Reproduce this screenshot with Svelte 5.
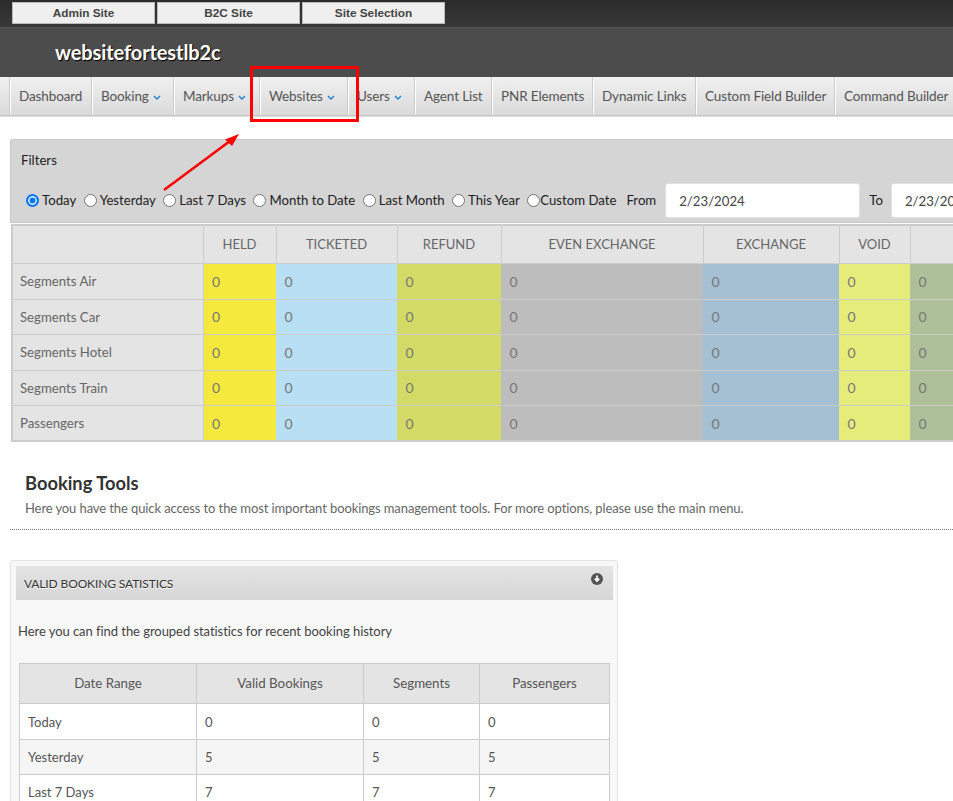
<script>
  const navItems = [
    { label: 'Dashboard', w: 82 },
    { label: 'Booking', w: 82, caret: true },
    { label: 'Markups', w: 86, caret: true },
    { label: 'Websites', w: 88, caret: true },
    { label: 'Users', w: 67, caret: true },
    { label: 'Agent List', w: 77 },
    { label: 'PNR Elements', w: 101 },
    { label: 'Dynamic Links', w: 103 },
    { label: 'Custom Field Builder', w: 139 },
    { label: 'Command Builder', w: 130 }
  ];
  const ranges = ['Today', 'Yesterday', 'Last 7 Days', 'Month to Date', 'Last Month', 'This Year', 'Custom Date'];
  const cols = [
    { label: 'HELD', w: 73, color: '#f4e93c' },
    { label: 'TICKETED', w: 121, color: '#b9dff4' },
    { label: 'REFUND', w: 104, color: '#d3da65' },
    { label: 'EVEN EXCHANGE', w: 202, color: '#bdbdbd' },
    { label: 'EXCHANGE', w: 136, color: '#a5c0d3' },
    { label: 'VOID', w: 71, color: '#e5ec7a' },
    { label: '', w: 90, color: '#adc09a' }
  ];
  const rows = ['Segments Air', 'Segments Car', 'Segments Hotel', 'Segments Train', 'Passengers'];
  const stats = [
    ['Today', 0, 0, 0],
    ['Yesterday', 5, 5, 5],
    ['Last 7 Days', 7, 7, 7]
  ];
</script>

<div class="page">
  <div class="topbar">
    <button class="site">Admin Site</button>
    <button class="site">B2C Site</button>
    <button class="site">Site Selection</button>
  </div>
  <header class="brand"><span>websitefortestlb2c</span></header>
  <nav class="nav">
    {#each navItems as item}
      <div class="nav-item" style="width:{item.w}px">
        {item.label}
        {#if item.caret}
          <svg class="caret" width="8" height="5" viewBox="0 0 8 5"><path d="M1 1l3 3 3-3" fill="none" stroke="#1f7fd0" stroke-width="1.4" /></svg>
        {/if}
      </div>
    {/each}
  </nav>

  <section class="filters">
    <div class="filters-title">Filters</div>
    <div class="filters-row">
      {#each ranges as r, i}
        <label class="radio" class:tight={i === 6}>
          <span class="dot" class:on={i === 0}></span>{r}
        </label>
      {/each}
      <span class="lbl from">From</span>
      <div class="date">2/23/2024</div>
      <span class="lbl to">To</span>
      <div class="date">2/23/2024</div>
    </div>
  </section>

  <table class="summary">
    <colgroup>
      <col style="width:191px" />
      {#each cols as c}<col style="width:{c.w}px" />{/each}
    </colgroup>
    <thead>
      <tr>
        <th></th>
        {#each cols as c}<th>{c.label}</th>{/each}
      </tr>
    </thead>
    <tbody>
      {#each rows as r}
        <tr>
          <td class="rowhead">{r}</td>
          {#each cols as c}<td style="background:{c.color}">0</td>{/each}
        </tr>
      {/each}
    </tbody>
  </table>

  <section class="tools">
    <h2>Booking Tools</h2>
    <p>Here you have the quick access to the most important bookings management tools. For more options, please use the main menu.</p>
  </section>

  <section class="panel">
    <div class="panel-head">
      <span>VALID BOOKING SATISTICS</span>
      <svg class="panel-icon" width="12" height="12" viewBox="0 0 12 12">
        <circle cx="6" cy="6" r="6" fill="#555" />
        <path d="M6 2.6v5M3.8 5.6L6 8l2.2-2.4" fill="none" stroke="#fff" stroke-width="1.7" />
      </svg>
    </div>
    <p class="panel-text">Here you can find the grouped statistics for recent booking history</p>
    <table class="stats">
      <colgroup>
        <col style="width:177px" /><col style="width:167px" /><col style="width:116px" /><col style="width:130px" />
      </colgroup>
      <thead>
        <tr><th>Date Range</th><th>Valid Bookings</th><th>Segments</th><th>Passengers</th></tr>
      </thead>
      <tbody>
        {#each stats as s}
          <tr>{#each s as v}<td>{v}</td>{/each}</tr>
        {/each}
      </tbody>
    </table>
  </section>

  <div class="highlight"></div>
  <svg class="arrow" width="90" height="70" viewBox="0 0 90 70">
    <path d="M4 60L70 11" stroke="#f00" stroke-width="2.6" fill="none" />
    <path d="M79 4L65 9.5 72 16z" fill="#f00" />
  </svg>
</div>

<style>
  :global(html), :global(body) {
    margin: 0;
    overflow: hidden;
    background: #fff;
  }
  .page {
    position: relative;
    width: 953px;
    height: 801px;
    overflow: hidden;
    font-family: Lato, "Liberation Sans", sans-serif;
    font-size: 13px;
    color: #555;
  }
  .topbar {
    height: 27px;
    box-sizing: border-box;
    padding: 2px 0 0 12px;
    display: flex;
    gap: 2px;
    background: linear-gradient(#2b2b2b, #383838);
  }
  .site {
    width: 143px;
    height: 22px;
    padding: 0;
    border: 1px solid #bbb;
    background: #efefef;
    font: bold 11.8px "Liberation Sans", sans-serif;
    color: #444;
  }
  .brand {
    height: 50px;
    box-sizing: border-box;
    padding: 0 0 2px 55px;
    display: flex;
    align-items: center;
    background: #4c4c4c;
    border-top: 1px solid #555;
    font-size: 20px;
    letter-spacing: -0.1px;
    font-weight: 700;
    color: #fff;
    text-shadow: 1px 1px 1px #000;
  }
  .nav {
    height: 39px;
    box-sizing: border-box;
    padding-left: 10px;
    display: flex;
    background: linear-gradient(#f0f0f0, #dadada);
    border-bottom: 1px solid #c4c4c4;
    box-shadow: 0 1px 1px #e2e2e2;
    white-space: nowrap;
  }
  .nav-item {
    flex: none;
    box-sizing: border-box;
    padding-left: 8px;
    display: flex;
    align-items: center;
    gap: 4px;
    border-left: 1px solid #fff;
    box-shadow: -1px 0 0 #ccc;
    font-size: 13.5px;
    letter-spacing: -0.12px;
    color: #555;
  }
  .caret {
    flex: none;
    margin-top: 2px;
  }
  .filters {
    box-sizing: border-box;
    width: 960px;
    height: 84px;
    margin: 23px 0 0 10px;
    padding: 12px 10px 0;
    background: #d5d5d5;
    border-top: 1px solid #c8c8c8;
    border-left: 1px solid #c8c8c8;
    border-bottom: 1px solid #c8c8c8;
    border-radius: 3px 0 0 0;
    font-size: 13.2px;
    color: #222;
  }
  .filters-title {
    height: 17px;
    line-height: 17px;
  }
  .filters-row {
    margin-top: 14px;
    height: 34px;
    display: flex;
    align-items: center;
    white-space: nowrap;
    margin-left: 5px;
    width: 960px;
  }
  .radio {
    display: flex;
    align-items: center;
    margin-right: 7.4px;
  }
  .radio.tight {
    margin-right: 0;
  }
  .radio.tight .dot {
    margin-right: 0;
  }
  .dot {
    box-sizing: border-box;
    width: 13px;
    height: 13px;
    margin-right: 3px;
    border: 1px solid #767676;
    border-radius: 50%;
    background: #fff;
  }
  .dot.on {
    border: 2px solid #0075ff;
    box-shadow: inset 0 0 0 1.5px #fff;
    background: #0075ff;
  }
  .lbl.from {
    margin-left: 10px;
  }
  .lbl.to {
    margin: 0 8px 0 0;
  }
  .date {
    flex: none;
    box-sizing: border-box;
    width: 195px;
    height: 35px;
    margin: 0 9px 0 9px;
    padding-left: 13px;
    line-height: 35px;
    background: #fff;
    border: 1px solid #e2e2e2;
    border-radius: 3px;
    color: #444;
  }
  .date:last-child {
    margin-left: 0;
  }
  table {
    border-collapse: collapse;
    table-layout: fixed;
  }
  .summary {
    width: 988px;
    margin: 1px 0 0 11px;
    border: 2px solid #ccc;
  }
  .summary th {
    height: 37px;
    box-sizing: content-box;
    padding: 0 0 0;
    background: #e4e4e4;
    border: 1px solid #ccc;
    font-size: 13px;
    line-height: 15px;
    vertical-align: top;
    padding-top: 11px;
    height: 26px;
    font-weight: 400;
    color: #666;
    text-align: center;
  }
  .summary td {
    height: 35.5px;
    padding: 0 0 0 8.6px;
    box-sizing: border-box;
    border: 1px solid #ccc;
    border-width: 1px 0;
    font-size: 14px;
    color: #777;
  }
  .summary td.rowhead {
    padding-left: 7px;
    background: #e4e4e4;
    border-right: 1px solid #ccc;
    color: #666;
    font-size: 13.2px;
  }
  .tools {
    height: 88px;
    box-sizing: border-box;
    margin: 0 0 0 10px;
    padding: 27px 0 0 15px;
    border-bottom: 1px dotted #777;
  }
  .tools h2 {
    margin: 0;
    font-size: 18.3px;
    line-height: 28px;
    font-weight: 700;
    color: #333;
  }
  .tools p {
    margin: 2px 0 0;
    line-height: 18px;
    font-size: 13px;
    color: #666;
    letter-spacing: -0.1px;
  }
  .panel {
    box-sizing: border-box;
    width: 608px;
    margin: 30px 0 0 10px;
    padding: 5px;
    height: 300px;
    background: #f8f8f8;
    border: 1px solid #e3e3e3;
    border-radius: 3px;
  }
  .panel-head {
    position: relative;
    height: 34px;
    box-sizing: border-box;
    margin-right: -1px;
    padding: 1px 0 0 8px;
    display: flex;
    align-items: center;
    background: linear-gradient(#e4e4e4, #d6d6d6);
    font-size: 12px;
    letter-spacing: -0.13px;
    color: #333;
    text-shadow: 0 1px 0 #fff;
  }
  .panel-icon {
    position: absolute;
    right: 10px;
    top: 7px;
  }
  .panel-text {
    margin: 23px 0 0 2px;
    height: 17px;
    line-height: 17px;
    font-size: 13px;
    letter-spacing: -0.05px;
    color: #444;
  }
  .stats {
    width: 590px;
    margin: 23px 0 0 3px;
    background: #fff;
  }
  .stats th {
    height: 37px;
    padding: 0 0 2px;
    background: #e4e4e4;
    border: 1px solid #ccc;
    font-size: 13.3px;
    font-weight: 400;
    color: #555;
  }
  .stats td {
    height: 35px;
    padding: 0 0 0 8px;
    box-sizing: border-box;
    border: 1px solid #ccc;
    font-size: 13px;
    color: #555;
  }
  .stats tbody tr:first-child td {
    height: 36px;
  }
  .stats tbody tr:nth-child(even) td {
    background: #f5f5f5;
  }
  .highlight {
    position: absolute;
    left: 250px;
    top: 66px;
    width: 109px;
    height: 56px;
    box-sizing: border-box;
    border: 3px solid #f00;
  }
  .arrow {
    position: absolute;
    left: 160px;
    top: 130px;
  }
</style>
